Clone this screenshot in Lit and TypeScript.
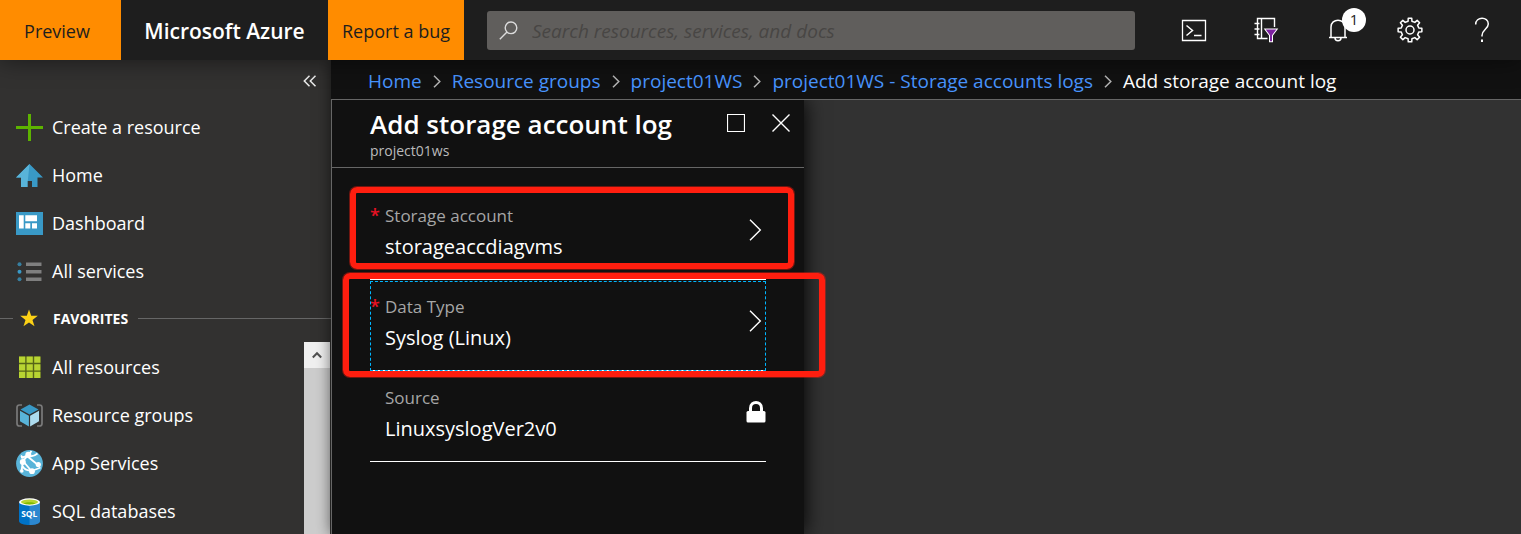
import { LitElement, html, css, svg } from "lit";
import { customElement, property } from "lit/decorators.js";

const icons = {
  search: html`<svg width="19" height="19" viewBox="0 0 19 19" fill="none" stroke="#dcdcdc" stroke-width="1.4"><circle cx="12" cy="6.8" r="5.8" /><path d="M8 11 .8 18.2" /></svg>`,
  shell: html`<svg width="26" height="24" viewBox="0 0 26 24" fill="none" stroke="#fff" stroke-width="1.5"><path d="M1.5 2.500h23v20h-23z" stroke-width="1.3" /><path d="M5.500 7.500 11.500 12.500 5.500 17.500M13 17.500h7.500" /></svg>`,
  filter: html`<svg width="26" height="26" viewBox="0 0 26 26" fill="none" stroke="#fff" stroke-width="1.4"><path d="M21.500 10V1.500H4.500v20h10M8.500 1.500v20M1.500 6.500h5M1.500 12h5M1.500 17.500h5" /><path d="M10.700 11.500h14.600l-5.300 7v6.700h-4V18.500z" fill="#fff" stroke="none" /><path d="M12.700 12.500h10.600l-4.300 5.700v6h-2v-6z" fill="#7d22a0" stroke="none" /></svg>`,
  bell: html`<svg width="22" height="24" viewBox="0 0 22 24" fill="none" stroke="#fff" stroke-width="1.500"><path d="M2 19.500h18M4 19.500V9c0-9 14-9 14 0v10.500M8 20c0 3.600 6 3.600 6 0" /></svg>`,
  gear: html`<svg width="26" height="26" viewBox="0 0 26 26" fill="none" stroke="#fff" stroke-width="1.500" stroke-linejoin="round"><path d="M11.070 4.220 11.260 1.130 14.740 1.130 14.930 4.220 17.840 5.430 20.170 3.380 22.620 5.830 20.570 8.160 21.780 11.070 24.870 11.260 24.870 14.740 21.780 14.930 20.570 17.840 22.620 20.170 20.170 22.620 17.840 20.570 14.930 21.780 14.740 24.870 11.260 24.870 11.070 21.780 8.160 20.570 5.830 22.620 3.380 20.170 5.430 17.840 4.220 14.930 1.130 14.740 1.130 11.260 4.220 11.070 5.430 8.160 3.380 5.830 5.830 3.380 8.160 5.430Z" /><circle cx="13" cy="13" r="4" /></svg>`,
  help: html`<svg width="16" height="26" viewBox="0 0 16 26" fill="none" stroke="#fff" stroke-width="1.500"><path d="M1.700 7.500C1.700-.7 14.300-.7 14.300 7c0 5-6.300 5.800-6.300 11.500v1" /><path d="M8 22.500v2.500" stroke-width="2" /></svg>`,
  collapse: html`<svg width="14" height="12" viewBox="0 0 14 12" fill="none" stroke="#eee" stroke-width="1.500"><path d="M6.500.8 1.300 6l5.200 5.200M12.500.8 7.300 6l5.200 5.200" /></svg>`,
  crumb: html`<svg width="8" height="13" viewBox="0 0 8 13" fill="none" stroke="#b4b4b4" stroke-width="1.500"><path d="M1 .7 6.800 6.500 1 12.300" /></svg>`,
  chevron: html`<svg width="20" height="22" viewBox="0 0 20 22" fill="none" stroke="#fff" stroke-width="1.400"><path d="M4 .8 14.300 11 4 21.200" /></svg>`,
  lock: html`<svg width="20" height="22" viewBox="0 0 20 22"><path d="M4.500 11V7.200C4.500-.4 15.500-.4 15.500 7.200V11" fill="none" stroke="#fff" stroke-width="3" /><rect x=".5" y="10" width="19" height="11.500" rx="1.500" fill="#fff" /></svg>`,
  maximize: html`<svg width="18" height="18" viewBox="0 0 18 18"><path d="M.5.5h17v17H.5z" fill="none" stroke="#fff" stroke-width="1.200" /></svg>`,
  close: html`<svg width="18" height="18" viewBox="0 0 18 18"><path d="m.5.5 17 17m0-17-17 17" fill="none" stroke="#fff" stroke-width="1.400" /></svg>`,
  up: html`<svg width="10" height="8" viewBox="0 0 10 8" fill="none" stroke="#505050" stroke-width="2"><path d="M.8 6.500 5 2.200l4.200 4.300" /></svg>`,
  star: html`<svg width="27" height="27" viewBox="0 0 27 27"><path d="m13 4.500 2.200 6.300h6.600l-5.300 4.100 2 6.400-5.500-3.900-5.500 3.900 2-6.400-5.300-4.100h6.600z" fill="#fcd116" /></svg>`,
};

const box = (body: unknown) => html`<svg width="27" height="27" viewBox="0 0 27 27">${body}</svg>`;

const navIcons = {
  plus: box(svg`<path d="M12 0h3v12h12v3H15v12h-3V15H0v-3h12z" fill="#5db300"/>`),
  home: box(svg`<path d="M13.500 2 27 15.500h-5.500V25h-5.500v-6h-4.500v6H5v-9.500H0z" fill="#3999c6"/><path d="M13.500 2 11.800 19h-.3v6H5v-9.500H0z" fill="#59b4d9"/>`),
  dashboard: box(svg`<path d="M0 2h27v23H0z" fill="#3999c6"/><path d="M3 5.300h4.700v13.200H3zM9.300 5.300H21v6H9.300zM9.300 13.300h5v5.200h-5zM16 13.300h5v5.200h-5z" fill="#fff"/>`),
  list: box(svg`<g fill="#3999c6"><circle cx="3.500" cy="6.300" r="2" opacity=".75"/><circle cx="3.500" cy="13.700" r="2"/><circle cx="3.500" cy="21.200" r="2" opacity=".75"/></g><path d="M10 4.500h15.500v3.600H10zM10 12h15.500v3.500H10zM10 19.500h15.500V23H10z" fill="#7f7f7f"/>`),
  grid: box(svg`<path d="M3 2.500h21.500V24H3z" fill="#566518"/><path d="M3 2.500h6.200v6.200H3zM10.600 2.500h6.200v6.200h-6.200zM18.200 2.500h6.200v6.200h-6.200zM3 10.200h6.200v6.200H3zM10.600 10.200h6.200v6.200h-6.200zM18.200 10.200h6.200v6.200h-6.200zM3 17.800h6.200V24H3zM10.600 17.800h6.200V24h-6.200zM18.200 17.800h6.200V24h-6.200z" fill="#b8d432"/>`),
  cube: box(svg`<path d="M6 3H3.500C1.500 3 1 4 1 5.500v16C1 23 1.500 24 3.500 24H6M21 3h2.500C25.500 3 26 4 26 5.500v16c0 1.500-.5 2.500-2.500 2.500H21" fill="none" stroke="#7a7a7a" stroke-width="1.700"/><path d="m13.500 2.500 9 5-9 5-9-5z" fill="#3999c6"/><path d="m4 8.800 8.900 5v10.700L4 19.300z" fill="#59b4d9"/><path d="m23 8.800-8.900 5v10.700L23 19.300z" fill="#addbee"/>`),
  globe: box(svg`<circle cx="13.500" cy="13.500" r="13.400" fill="#59b4d9"/><g fill="none" stroke="#fff" stroke-width="2.200"><path d="M5 7.500c4-.5 8-2.500 10.500-6.500M5 5.500l2.500 3M12 5.500c3 1.500 7 0 9.500-2M12 5.500 7 11l-1.500 10M7 11l8 9.500M11 6l11 9M6 14.500C7.500 20 13 23 24.500 17.500" stroke-width="1.800"/></g><g fill="#fff"><circle cx="12.300" cy="4.800" r="3"/><circle cx="6.800" cy="12" r="3"/><circle cx="22.300" cy="14.500" r="2.600"/><circle cx="16" cy="21.200" r="2.900"/><circle cx="5.800" cy="21" r="1.800"/></g>`),
  sql: box(svg`<path d="M3 4v19c0 5.300 21 5.300 21 0V4z" fill="#0072c6"/><path d="M13.500 4H24v19c0 2.600-5 4-10.500 4z" fill="#3b8fd2" opacity=".75"/><ellipse cx="13.500" cy="4" rx="10.500" ry="3.700" fill="#fff"/><ellipse cx="13.500" cy="3.900" rx="8.500" ry="2.500" fill="#b8d432"/><path d="M7.500 5.600c3-1.800 9-1.800 12 0-3 1.200-9 1.200-12 0z" fill="#7fba00"/><text x="13.300" y="19.200" text-anchor="middle" font-family="Open Sans, sans-serif" font-weight="700" font-size="8.500" fill="#fff">SQL</text>`),
};

@customElement("azure-topbar")
export class AzureTopbar extends LitElement {
  static styles = css`
    :host { display: flex; height: 60px; background: #1e1e1e; color: #fff; position: relative; z-index: 3; box-shadow: 0 0 24px rgba(0, 0, 0, 0.5); }
    * { box-sizing: border-box; }
    .tag, .brand { display: flex; align-items: center; justify-content: center; padding: 2px 0 0; font: 18px/24px "Open Sans", sans-serif; text-decoration: none; border: 0; white-space: nowrap; }
    .tag { background: #ff8c00; color: #1e1e1e; }
    .preview { width: 121px; padding-right: 7px; }
    .report { width: 136px; }
    .brand { width: 207px; color: #fff; font-size: 21px; font-weight: 600; }
    .search { flex: 1; display: flex; align-items: center; gap: 14px; height: 39px; margin: 11px 23px 0; padding: 0 12px; border-radius: 3px; background: #605e5c; }
    .search svg { flex: none; }
    .query { flex: 1; min-width: 0; padding: 0; border: 0; outline: 0; background: none; color: #fff; font: italic 19px/24px "Open Sans", sans-serif; }
    .query::placeholder { color: #484644; opacity: 1; }
    .tools { display: flex; padding-right: 3px; }
    .tool { position: relative; display: flex; align-items: center; justify-content: center; width: 72px; padding: 0; border: 0; background: none; }
    .badge { position: absolute; top: 8px; right: 8px; width: 24px; height: 24px; border-radius: 50%; background: #fff; color: #1e1e1e; font: 15px/22px "Open Sans", sans-serif; }
  `;
  render() {
    return html`
      <button class="tag preview">Preview</button>
      <a class="brand" href="#">Microsoft Azure</a>
      <button class="tag report">Report a bug</button>
      <label class="search">${icons.search}
        <input class="query" type="search" aria-label="Search" placeholder="Search resources, services, and docs" />
      </label>
      <div class="tools">
        <button class="tool" aria-label="Cloud Shell">${icons.shell}</button>
        <button class="tool" aria-label="Directory and subscription filter">${icons.filter}</button>
        <button class="tool" aria-label="Notifications">${icons.bell}<span class="badge">1</span></button>
        <button class="tool" aria-label="Settings">${icons.gear}</button>
        <button class="tool" aria-label="Help">${icons.help}</button>
      </div>`;
  }
}

@customElement("azure-sidebar")
export class AzureSidebar extends LitElement {
  static styles = css`
    :host { display: flex; flex-direction: column; width: 331px; flex: none; min-height: 0; overflow: hidden; background: #323130; }
    * { box-sizing: border-box; }
    .top { display: flex; justify-content: flex-end; height: 43px; padding-right: 14px; }
    .collapse { display: flex; align-items: center; height: 42px; padding: 0; border: 0; background: none; }
    .items { display: flex; flex-direction: column; }
    .item { display: flex; align-items: center; gap: 9px; height: 48px; flex: none; padding-left: 16px; color: #fff; text-decoration: none; font: 18px/24px "Open Sans", sans-serif; }
    .item svg { flex: none; }
    .heading { display: flex; align-items: center; height: 47px; flex: none; margin: 0; color: #fff; font: 700 14px/20px "Open Sans", sans-serif; }
    .rule { height: 1px; background: #666; width: 13px; }
    .star { display: flex; margin: 0 10px 0 3px; }
    .long { flex: 1; margin-left: 10px; }
    .scroller { flex: 1; display: flex; min-height: 0; overflow: hidden; }
    .favorites { flex: 1; padding-top: 1px; }
    .bar { width: 26px; margin-right: 1px; background: #cdcdcd; }
    .arrow { display: flex; align-items: center; justify-content: center; width: 26px; height: 26px; padding: 0; border: 0; background: #f0f0f0; }
  `;
  private item(icon: unknown, text: string) {
    return html`<a class="item" href="#">${icon}<span>${text}</span></a>`;
  }
  render() {
    return html`
      <div class="top"><button class="collapse" aria-label="Collapse menu">${icons.collapse}</button></div>
      <nav class="items">
        ${this.item(navIcons.plus, "Create a resource")}
        ${this.item(navIcons.home, "Home")}
        ${this.item(navIcons.dashboard, "Dashboard")}
        ${this.item(navIcons.list, "All services")}
      </nav>
      <h2 class="heading"><span class="rule"></span><span class="star">${icons.star}</span>FAVORITES<span class="rule long"></span></h2>
      <div class="scroller">
        <nav class="items favorites">
          ${this.item(navIcons.grid, "All resources")}
          ${this.item(navIcons.cube, "Resource groups")}
          ${this.item(navIcons.globe, "App Services")}
          ${this.item(navIcons.sql, "SQL databases")}
        </nav>
        <div class="bar"><button class="arrow" aria-label="Scroll up">${icons.up}</button></div>
      </div>`;
  }
}

@customElement("blade-field")
export class BladeField extends LitElement {
  @property() label = "";
  @property() value = "";
  @property({ type: Boolean }) required = false;
  @property({ type: Boolean }) locked = false;
  @property({ type: Boolean }) active = false;
  static styles = css`
    :host { display: block; position: relative; }
    * { box-sizing: border-box; }
    .field { position: relative; display: flex; align-items: center; justify-content: space-between; width: 100%; height: 91px; padding: 0 0 8px; border: 0; border-bottom: 1px solid #fff; background: none; color: #fff; text-align: left; font: 20px/31px "Open Sans", sans-serif; }
    .active::after { content: ""; position: absolute; inset: 1px 0 -1px; border: 1px dashed #00b7ff; }
    .text { display: grid; grid-template-columns: 15px 1fr; padding-top: 1px; }
    .label { color: #a6a6a6; font-size: 17px; }
    .star { color: #e81123; font-size: 18px; font-weight: 600; }
    .value { grid-column: 2; }
  `;
  render() {
    return html`<button class="field ${this.active ? "active" : ""}" ?disabled=${this.locked}>
      <span class="text"><span class="star">${this.required ? "*" : ""}</span><span class="label">${this.label}</span><span class="value">${this.value}</span></span>
      ${this.locked ? icons.lock : icons.chevron}
    </button>`;
  }
}

@customElement("app-root")
export class AppRoot extends LitElement {
  static styles = css`
    :host { display: flex; flex-direction: column; height: 100vh; overflow: hidden; background: #323232; font-family: "Open Sans", sans-serif; color: #fff; }
    * { box-sizing: border-box; }
    .body { flex: 1; display: flex; min-height: 0; }
    .main { flex: 1; display: flex; flex-direction: column; min-width: 0; position: relative; box-shadow: 0 0 14px rgba(0, 0, 0, 0.6); }
    .crumbs { display: flex; align-items: center; gap: 11px; height: 40px; flex: none; padding: 3px 0 0 37px; border-bottom: 1px solid #666; background: #111; font-size: 19px; line-height: 24px; white-space: nowrap; }
    .link { color: #4894fe; text-decoration: none; }
    .canvas { flex: 1; display: flex; min-height: 0; border-left: 1px solid #666; background: #323232; overflow: hidden; }
    .blade { width: 472px; max-width: 100%; background: #111; box-shadow: 0 0 20px #000; }
    .head { display: flex; justify-content: space-between; height: 68px; padding: 7px 14px 0 38px; border-bottom: 1px solid #666; }
    .title { margin: 0; font-size: 26px; line-height: 35px; font-weight: 600; }
    .sub { margin: 0; color: #bbb; font-size: 14px; line-height: 18px; }
    .actions { display: flex; align-items: flex-start; gap: 27px; padding-top: 7px; }
    .action { display: flex; padding: 0; border: 0; background: none; }
    .form { padding: 21px 38px 0; }
    .marked { position: relative; }
    .mark { position: absolute; z-index: 2; pointer-events: none; border: 6px solid #ff1e0f; border-radius: 7px; box-shadow: 0 0 0 1px rgba(255, 30, 15, 0.4); }
    .first { inset: -2px -28px 11px -20px; }
    .second { inset: -7px -59px -6px -27px; }
  `;
  render() {
    const trail = ["Home", "Resource groups", "project01WS", "project01WS - Storage accounts logs"];
    return html`
      <azure-topbar></azure-topbar>
      <div class="body">
        <azure-sidebar></azure-sidebar>
        <main class="main">
          <nav class="crumbs">
            ${trail.map((t) => html`<a class="link" href="#">${t}</a>${icons.crumb}`)}<span>Add storage account log</span>
          </nav>
          <div class="canvas">
            <section class="blade">
              <header class="head">
                <div><h1 class="title">Add storage account log</h1><p class="sub">project01ws</p></div>
                <div class="actions">
                  <button class="action" aria-label="Maximize">${icons.maximize}</button>
                  <button class="action" aria-label="Close">${icons.close}</button>
                </div>
              </header>
              <div class="form">
                <div class="marked"><blade-field label="Storage account" value="storageaccdiagvms" required></blade-field><div class="mark first"></div></div>
                <div class="marked"><blade-field label="Data Type" value="Syslog (Linux)" required active></blade-field><div class="mark second"></div></div>
                <blade-field label="Source" value="LinuxsyslogVer2v0" locked></blade-field>
              </div>
            </section>
          </div>
        </main>
      </div>`;
  }
}
